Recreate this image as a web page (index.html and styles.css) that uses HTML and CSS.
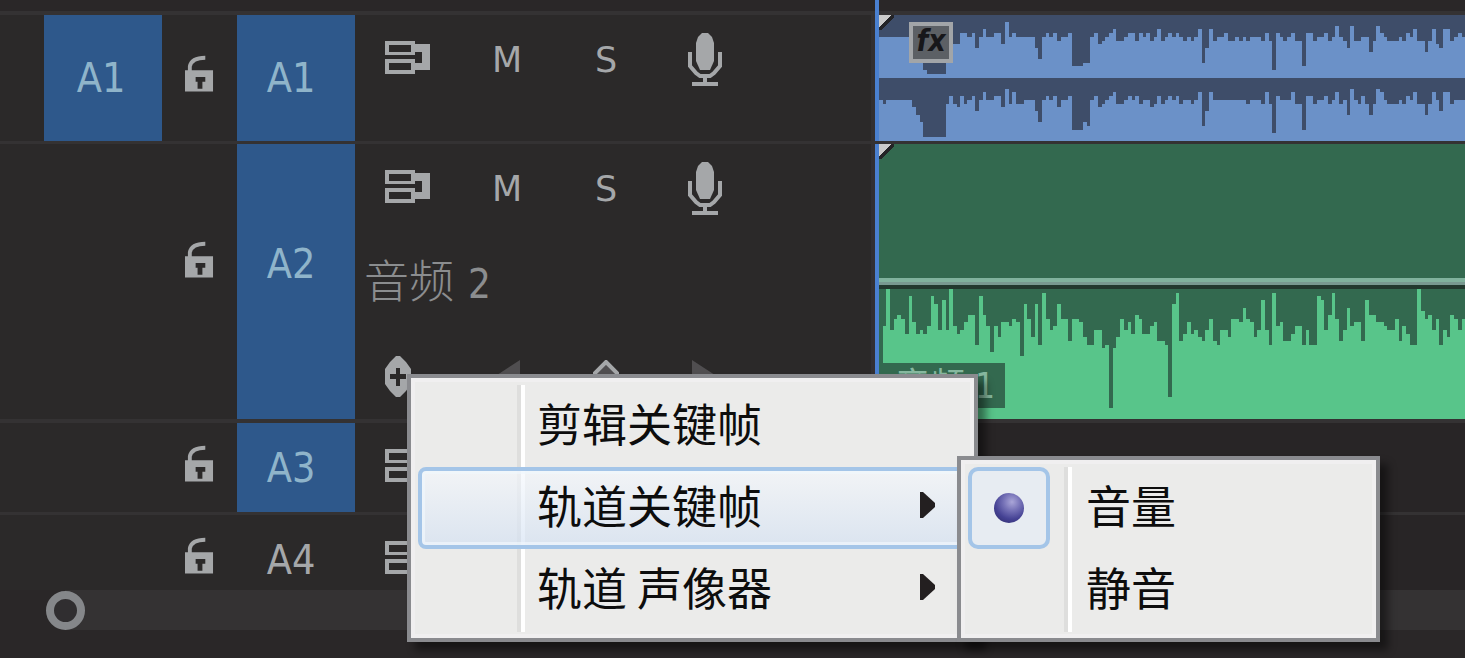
FILE: index.html
```html
<!DOCTYPE html>
<html lang="zh-CN">
<head>
<meta charset="utf-8">
<meta name="viewport" content="width=device-width, initial-scale=1">
<title>音频轨道</title>
<link rel="stylesheet" href="styles.css">
</head>
<body>
<svg class="defs" aria-hidden="true">
  <symbol id="lock" viewBox="0 0 30 46">
    <path fill-rule="evenodd" d="M0 15H29V37H0ZM11 22V27H13V34H18V27H21V22Z"/>
    <path class="line" d="M5 16V11C6 6 11 2 21 2"/>
  </symbol>
  <symbol id="sync" viewBox="0 0 46 38">
    <path fill-rule="evenodd" d="M0 0H30V3H45V29H30V33H0V18H30V22H37V11H30V14H0ZM4 4V11H26V4ZM4 22V29H26V22Z"/>
  </symbol>
  <symbol id="mic" viewBox="0 0 34 54">
    <path d="M14 0H20L24 4L26 10V28L22 37H12L8 28V10L10 4Z"/>
    <path class="line" d="M2 19V33L8 40L12 43H22L26 40L32 33V19M17 43V50M4 51H30"/>
  </symbol>
</svg>
<main class="timeline">
  <div class="ruler"></div>

  <section class="track">
    <div class="head">
      <button class="patch source on">A1</button>
      <button class="icon lock" aria-label="锁定 A1"><svg><use href="#lock"/></svg></button>
      <button class="patch on">A1</button>
      <div class="controls">
        <div class="tools">
          <button class="icon sync" aria-label="同步锁定"><svg><use href="#sync"/></svg></button>
          <button class="icon">M</button>
          <button class="icon">S</button>
          <button class="icon mic" aria-label="录音"><svg><use href="#mic"/></svg></button>
        </div>
      </div>
    </div>
    <div class="lane blue">
      <svg class="wave" viewBox="27 45 1758 378" preserveAspectRatio="none" aria-hidden="true">
        <path d="M27 235V110H117V132H159V210H170V221H228V132H270V100H292V110H305V100H315V143H327V110H338V88H348V110H372V100H393V132H405V66H416V110H427V100H438V110H495V143H505V177H516V110H527V100H538V110H549V100H560V122H572V110H595V100H606V197H639V188H660V110H672V100H684V132H696V122H706V110H716V100H729V88H738V122H762V110H774V100H796V122H807V100H818V110H829V100H840V122H851V110H860V88H872V122H885V235Z"/>
        <path d="M27 423V300H39V311H48V300H127V320H138V345H150V366H159V410H228V311H237V288H249V311H260V320H270V288H282V311H292V300H305V288H315V332H327V300H338V276H348V300H372V288H393V320H405V266H416V311H427V276H438V311H462V300H495V332H505V366H516V300H527V288H538V300H549V288H560V320H572V300H595V288H606V390H639V366H651V378H660V300H672V288H684V320H696V311H706V300H716V288H729V276H738V311H762V300H774V288H786V300H796V288H807V311H818V300H840V320H851V311H860V288H872V311H885V423Z"/>
        <g transform="translate(885 0)">
          <path d="M-1 235V110H9V100H20V110H33V100H42V110H54V122H66V110H78V122H88V110H99V88H111V188H120V143H132V88H144V122H156V110H177V100H189V122H210V110H222V122H234V110H243V122H255V110H288V122H300V100H312V122H321V210H333V100H345V110H354V122H366V110H378V100H390V122H411V197H423V100H444V122H456V110H477V100H489V122H501V110H510V78H522V110H534V122H546V143H555V78H567V122H588V110H612V155H624V122H633V78H645V100H657V110H666V122H702V110H711V122H723V100H735V110H744V88H756V122H780V155H789V122H801V88H813V132H822V143H834V88H855V122H867V110H879V100H891V110H900V235Z"/>
          <path d="M-1 423V300H9V288H20V300H33V288H42V311H54V300H78V311H88V300H99V276H111V378H120V332H132V276H144V300H243V311H255V300H288V311H300V276H312V311H321V398H333V288H345V300H378V276H390V311H411V390H423V288H444V311H456V300H477V288H489V311H501V300H510V276H522V311H534V300H546V345H555V266H567V300H579V311H588V288H600V311H612V345H624V311H633V266H645V276H657V300H666V311H702V300H711V311H723V288H735V300H744V276H756V311H780V345H789V311H801V276H813V300H822V332H834V276H855V311H867V300H900V423Z"/>
        </g>
      </svg>
      <i class="corner"></i>
      <span class="fx">fx</span>
    </div>
  </section>

  <section class="track tall">
    <div class="head">
      <span class="gap"></span>
      <button class="icon lock" aria-label="锁定 A2"><svg><use href="#lock"/></svg></button>
      <button class="patch on">A2</button>
      <div class="controls">
        <div class="tools">
          <button class="icon sync" aria-label="同步锁定"><svg><use href="#sync"/></svg></button>
          <button class="icon">M</button>
          <button class="icon">S</button>
          <button class="icon mic" aria-label="录音"><svg><use href="#mic"/></svg></button>
        </div>
        <div class="name">音频 <span>2</span></div>
        <div class="tools keys">
          <button class="icon key" aria-label="显示关键帧"><svg viewBox="0 0 26 42"><path fill-rule="evenodd" d="M11 0H15L21 6L26 13V28L21 35L15 41H11L5 35L0 28V13L5 6ZM11 12V18H5V23H11V30H15V23H21V18H15V12Z"/></svg></button>
          <button class="icon dim" aria-label="上一关键帧"><svg viewBox="0 0 26 34"><path d="M26 0V34L0 17Z"/></svg></button>
          <button class="icon" aria-label="添加关键帧"><svg viewBox="0 0 26 34"><path class="ring" d="M13 2L24 13V21L13 32L2 21V13Z"/></svg></button>
          <button class="icon dim" aria-label="下一关键帧"><svg viewBox="0 0 26 34"><path d="M0 0V34L26 17Z"/></svg></button>
        </div>
      </div>
    </div>
    <div class="lane green">
      <div class="channel"></div>
      <div class="channel lower">
        <svg class="wave" viewBox="27 87 1758 390" preserveAspectRatio="none" aria-hidden="true">
          <path d="M39 477V198H48V87H60V210H72V177H82V165H94V177H105V221H117V108H126V187H138V221H150V210H160V221H172V198H183V108H193V132H204V210H216V120H228V210H237V87H249V198H260V221H270V210H282V187H293V165H315V255H327V108H338V165H348V198H360V276H372V198H384V231H393V187H416V198H427V177H438V187H450V288H462V132H471V177H483V231H495V132H505V255H516V99H528V177H540V210H549V198H561V132H573V177H594V243H606V177H627V187H639V231H651V255H672V210H696V264H706V255H717V444H729V264H738V231H750V177H762V210H774V187H783V221H795V165H807V177H816V221H840V198H852V187H861V243H885V477Z"/>
          <path transform="translate(885 0)" d="M-1 477V255H9V410H21V132H33V99H42V243H54V221H66V187H78V221H88V210H99V231H111V243H120V210H132V177H144V243H156V255H165V210H189V231H198V177H222V187H234V144H243V177H255V187H267V231H276V210H288V120H300V210H312V255H321V99H333V198H345V187H354V243H378V221H390V198H411V255H423V210H432V255H456V108H468V120H477V210H489V165H501V99H510V177H522V243H534V210H546V144H555V198H567V187H588V243H600V120H612V165H633V187H657V198H666V210H690V177H702V243H711V198H723V221H735V255H756V87H768V153H780V177H789V165H801V210H813V177H822V255H834V210H846V231H855V165H867V177H879V210H891V177H900V477Z"/>
        </svg>
        <span class="clip-name">音频 1</span>
      </div>
      <i class="corner"></i>
    </div>
  </section>

  <section class="track small">
    <div class="head">
      <span class="gap"></span>
      <button class="icon lock" aria-label="锁定 A3"><svg><use href="#lock"/></svg></button>
      <button class="patch on">A3</button>
      <div class="controls"><div class="tools"><button class="icon sync" aria-label="同步锁定"><svg><use href="#sync"/></svg></button></div></div>
    </div>
    <div class="lane"></div>
  </section>

  <section class="track last">
    <div class="head">
      <span class="gap"></span>
      <button class="icon lock" aria-label="锁定 A4"><svg><use href="#lock"/></svg></button>
      <button class="patch">A4</button>
      <div class="controls"><div class="tools"><button class="icon sync" aria-label="同步锁定"><svg><use href="#sync"/></svg></button></div></div>
    </div>
    <div class="lane"></div>
  </section>

  <div class="scroll"><button class="knob" aria-label="缩放"></button><div class="bar"></div></div>

  <div class="menu" role="menu">
    <button class="item" role="menuitem">剪辑关键帧</button>
    <button class="item active" role="menuitem">轨道关键帧<svg class="arrow" viewBox="0 0 15 26"><path d="M0 0H3L15 11V15L3 26H0Z"/></svg></button>
    <button class="item" role="menuitem">轨道 声像器<svg class="arrow" viewBox="0 0 15 26"><path d="M0 0H3L15 11V15L3 26H0Z"/></svg></button>
  </div>
  <div class="menu sub" role="menu">
    <button class="item" role="menuitemradio" aria-checked="true"><span class="check"><i class="ball"></i></span>音量</button>
    <button class="item" role="menuitemradio" aria-checked="false">静音</button>
  </div>
</main>
</body>
</html>
```
FILE: styles.css
```css
*, *::before, *::after { box-sizing: border-box; }

body {
  margin: 0;
  min-height: 100vh;
  background: #2a2728;
  color: #a5a7a9;
  font-family: "DejaVu Sans Condensed", "DejaVu Sans", "Noto Sans CJK SC", sans-serif;
}

button {
  margin: 0;
  padding: 0;
  border: 0;
  background: none;
  color: inherit;
  font: inherit;
}

svg { display: block; fill: currentColor; }
.defs { position: absolute; width: 0; height: 0; }
.line { fill: none; stroke: currentColor; stroke-width: 4; }

.timeline { position: relative; min-height: 100vh; overflow: hidden; }

.ruler {
  height: 15px;
  background:
    linear-gradient(90deg, transparent 875px, #4a80d0 875px, #4a80d0 879px, transparent 879px),
    linear-gradient(transparent 11px, #343233 11px);
}

.track {
  display: flex;
  height: 129px;
  border-bottom: 3px solid #343233;
  background: #2b2929;
}
.track.tall { height: 279px; border-bottom-width: 4px; }
.track.small { height: 92px; }
.track.last { height: 75px; border-bottom: 0; overflow: hidden; }
.track.last .head { height: 90px; }

.head {
  display: grid;
  grid-template-columns: 118px 29px 118px 1fr;
  column-gap: 23px;
  flex: 0 0 875px;
  padding-left: 44px;
  border-right: 4px solid #323033;
}

.patch { padding-right: 10px; font-size: 41px; line-height: 48px; color: #a5a7a9; }
.patch.source { padding-right: 4px; }
.patch.on { background: #2e588b; color: #8fb4ca; }
.tall .patch, .tall .lock { padding-bottom: 36px; }

.icon { display: flex; align-items: center; justify-content: center; }
.lock svg { width: 30px; height: 46px; }

.controls { margin-left: 7px; }
.tools {
  display: grid;
  grid-template-columns: repeat(4, 46px);
  column-gap: 53px;
  align-items: center;
  height: 89px;
  font: 35px/48px "DejaVu Sans", sans-serif;
}
.sync svg { width: 46px; height: 38px; }
.mic svg { width: 34px; height: 54px; }
.keys { height: 85px; }
.keys svg { width: 26px; height: 34px; }
.keys .key { justify-content: flex-start; }
.keys .key svg { height: 42px; }
.dim { color: #504e50; }
.ring { fill: #504e50; stroke: #a5a7a9; stroke-width: 4; }

.name {
  margin-left: -21px;
  height: 101px;
  color: #8b8d8f;
  font: 300 45px/92px "Noto Sans CJK SC", sans-serif;
}
.name span {
  margin-left: 4px;
  font: 40px "DejaVu Sans Condensed", "DejaVu Sans", sans-serif;
}

.lane {
  position: relative;
  flex: 1;
  min-width: 0;
  background: #282526;
}
.blue, .green { border-left: 4px solid #4a80d0; }
.blue { background: #3e4d69; color: #6b91c8; }
.green { display: flex; flex-direction: column; background: #33694f; color: #58c58a; }
.wave { width: 100%; height: 100%; shape-rendering: crispEdges; }

.channel {
  height: 141px;
  border-bottom: 3px solid #789990;
  box-shadow: inset 0 -4px #80b29d;
}
.channel.lower {
  position: relative;
  flex: 1;
  border: 0;
  border-top: 4px solid #22392e;
  box-shadow: none;
}
.clip-name {
  position: absolute;
  left: 0;
  top: 74px;
  width: 126px;
  padding: 2px 10px 0 0;
  background: #33694f;
  color: #86b89f;
  font-size: 35px;
  line-height: 43px;
  text-align: right;
}

.corner {
  position: absolute;
  left: 0;
  top: 0;
  width: 15px;
  height: 15px;
  background: linear-gradient(135deg, #cbcbcb 40%, #242427 41%, #242427 58%, transparent 59%);
}
.fx {
  position: absolute;
  left: 30px;
  top: 7px;
  width: 44px;
  height: 41px;
  border: 4px solid #a2a5a8;
  background: #5c6065;
  color: #17171a;
  font: italic bold 30px/30px "DejaVu Sans Condensed", "DejaVu Sans", sans-serif;
  text-align: center;
}

.scroll { display: flex; align-items: center; height: 40px; padding-left: 46px; }
.bar { flex: 1; height: 40px; margin-left: -20px; background: #343233; }
.knob {
  z-index: 1;
  width: 39px;
  height: 39px;
  border: 8px solid #85878a;
  border-radius: 50%;
  background: #302e30;
}

.menu {
  position: absolute;
  z-index: 2;
  left: 407px;
  top: 374px;
  width: 571px;
  padding: 7px;
  border: 4px solid #8a8b8f;
  background: #ebebea;
  box-shadow: inset 0 0 0 4px #f0eff0, 8px 8px 8px rgba(0, 0, 0, .45);
  color: #0d0d0d;
  font: 45px/82px "Noto Sans CJK SC", sans-serif;
}
.menu::before {
  content: "";
  position: absolute;
  left: 106px;
  top: 7px;
  bottom: 6px;
  width: 8px;
  border-left: 4px solid #dededd;
  border-right: 4px solid #fff;
}
.item {
  position: relative;
  display: flex;
  align-items: center;
  width: 100%;
  height: 82px;
  padding: 0 32px 6px 119px;
  line-height: 74px;
  white-space: nowrap;
}
.active {
  padding: 0 28px 6px 115px;
  border: 4px solid #a4c5e8;
  border-radius: 8px;
  background: linear-gradient(rgba(245, 248, 252, .65), rgba(211, 225, 243, .65));
  box-shadow: inset 0 0 0 3px rgba(240, 246, 252, .7);
}
.arrow { width: 15px; height: 26px; margin-left: auto; color: #231f20; }

.sub { left: 957px; top: 456px; width: 423px; }
.sub::before { left: 103px; }
.sub .item { padding-left: 118px; }
.check {
  position: absolute;
  left: 0;
  top: 0;
  display: grid;
  place-items: center;
  width: 82px;
  height: 82px;
  border: 4px solid #a4c5e8;
  border-radius: 10px;
  background: #e7ecf2;
}
.ball {
  width: 30px;
  height: 30px;
  border-radius: 50%;
  background: radial-gradient(circle at 60% 30%, #aaa6d8, #7773b8 30%, #454294 62%, #292762);
}
```
